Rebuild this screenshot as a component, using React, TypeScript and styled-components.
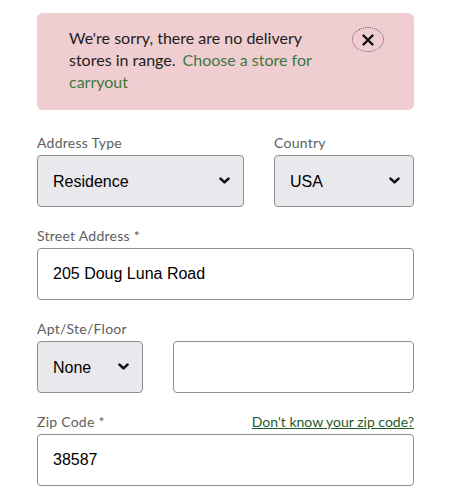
import React from 'react';
import styled, { createGlobalStyle } from 'styled-components';

const GlobalStyle = createGlobalStyle`
  html, body {
    margin: 0;
    padding: 0;
    background: #ffffff;
  }
  body {
    font-family: Lato, "Open Sans", sans-serif;
  }
`;

const Page = styled.div`
  padding: 13px 0 0 37px;
  width: 377px;
`;

const Alert = styled.div`
  display: flex;
  align-items: flex-start;
  background: #efcdd0;
  border-radius: 6px;
  padding: 14px 30px 17px 32px;
  margin-bottom: 23px;
`;

const AlertText = styled.p`
  flex: 1;
  margin: 0;
  font-family: Lato, sans-serif;
  font-size: 16px;
  line-height: 22px;
  color: #1e1e1e;
`;

const AlertLink = styled.a`
  color: #3b7a41;
  text-decoration: none;
  padding-left: 7px;
`;

const CloseButton = styled.button`
  flex: none;
  width: 32px;
  height: 25px;
  margin: 0 0 0 12px;
  padding: 0;
  border: 1px dotted #555;
  border-radius: 50%;
  background: transparent;
  display: flex;
  align-items: center;
  justify-content: center;
  color: #111;
  cursor: pointer;
`;

const Row = styled.div<{ $cols?: string }>`
  display: grid;
  grid-template-columns: ${(p) => p.$cols || '1fr'};
  column-gap: 30px;
  margin-bottom: 19px;
`;

const Field = styled.div`
  display: flex;
  flex-direction: column;
`;

const LabelRow = styled.div`
  display: flex;
  justify-content: space-between;
  align-items: baseline;
  height: 20px;
  margin-bottom: 2px;
`;

const Label = styled.label`
  font-family: Lato, sans-serif;
  font-size: 14px;
  line-height: 20px;
  letter-spacing: 0.25px;
  color: #606060;
`;

const HelpLink = styled.a`
  font-family: Lato, sans-serif;
  font-size: 14px;
  line-height: 20px;
  color: #1f5a2b;
  text-decoration: underline;
`;

const SelectWrap = styled.div`
  position: relative;
`;

const Select = styled.select`
  appearance: none;
  -webkit-appearance: none;
  width: 100%;
  height: 52px;
  box-sizing: border-box;
  border: 1px solid #8f8f8f;
  border-radius: 4px;
  background: #e9e8ec;
  padding: 0 36px 0 15px;
  font-family: "Liberation Sans", Arial, sans-serif;
  font-size: 16px;
  color: #000;
  outline: none;
`;

const Chevron = styled.svg`
  position: absolute;
  right: 14px;
  top: 22px;
  pointer-events: none;
`;

const Input = styled.input`
  width: 100%;
  height: 52px;
  box-sizing: border-box;
  border: 1px solid #8f8f8f;
  border-radius: 4px;
  background: #ffffff;
  padding: 0 15px;
  font-family: "Liberation Sans", Arial, sans-serif;
  font-size: 16px;
  color: #000;
  outline: none;
`;

const Dropdown: React.FC<{ value: string; options: string[] }> = ({ value, options }) => (
  <SelectWrap>
    <Select defaultValue={value}>
      {options.map((o) => (
        <option key={o}>{o}</option>
      ))}
    </Select>
    <Chevron width="11" height="8" viewBox="0 0 11 8">
      <path d="M1.5 1.6 L5.5 5.4 L9.5 1.6" fill="none" stroke="#111" strokeWidth="2.6" strokeLinecap="round" strokeLinejoin="round" />
    </Chevron>
  </SelectWrap>
);

export default function App() {
  return (
    <Page>
      <GlobalStyle />
      <Alert>
        <AlertText>
          We're sorry, there are no delivery stores in range.
          <AlertLink href="#">Choose a store for carryout</AlertLink>
        </AlertText>
        <CloseButton aria-label="Close">
          <svg width="12" height="12" viewBox="0 0 12 12">
            <path d="M1.5 1.5 L10.5 10.5 M10.5 1.5 L1.5 10.5" stroke="#111" strokeWidth="2.4" strokeLinecap="round" />
          </svg>
        </CloseButton>
      </Alert>

      <Row $cols="207px 140px">
        <Field>
          <LabelRow>
            <Label>Address Type</Label>
          </LabelRow>
          <Dropdown value="Residence" options={['Residence', 'Business', 'Campus', 'Hotel']} />
        </Field>
        <Field>
          <LabelRow>
            <Label>Country</Label>
          </LabelRow>
          <Dropdown value="USA" options={['USA', 'Canada']} />
        </Field>
      </Row>

      <Row>
        <Field>
          <LabelRow>
            <Label>Street Address *</Label>
          </LabelRow>
          <Input defaultValue="205 Doug Luna Road" />
        </Field>
      </Row>

      <Row $cols="106px 241px">
        <Field>
          <LabelRow>
            <Label>Apt/Ste/Floor</Label>
          </LabelRow>
          <Dropdown value="None" options={['None', 'Apt', 'Suite', 'Floor']} />
        </Field>
        <Field>
          <LabelRow />
          <Input />
        </Field>
      </Row>

      <Row>
        <Field>
          <LabelRow>
            <Label>Zip Code *</Label>
            <HelpLink href="#">Don't know your zip code?</HelpLink>
          </LabelRow>
          <Input defaultValue="38587" />
        </Field>
      </Row>
    </Page>
  );
}
